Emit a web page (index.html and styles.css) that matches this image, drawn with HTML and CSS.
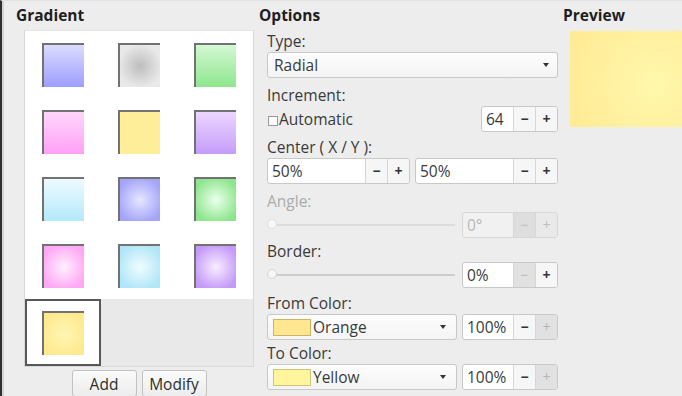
FILE: index.html
```html
<!DOCTYPE html>
<html lang="en">
<head>
    <meta charset="UTF-8">
    <meta name="viewport" content="width=device-width, initial-scale=1.0">
    <title>Gradient</title>
    <link rel="stylesheet" href="styles.css">
</head>
<body>
    <div class="window">
        <section class="col col-gradient">
            <h2 class="heading">Gradient</h2>
            <div class="gradient-list">
                <div class="cell"><span class="swatch sw-blue"></span></div>
                <div class="cell"><span class="swatch sw-grey"></span></div>
                <div class="cell"><span class="swatch sw-green"></span></div>
                <div class="cell"><span class="swatch sw-pink"></span></div>
                <div class="cell"><span class="swatch sw-yellow"></span></div>
                <div class="cell"><span class="swatch sw-purple"></span></div>
                <div class="cell"><span class="swatch sw-cyan"></span></div>
                <div class="cell"><span class="swatch sw-blue-radial"></span></div>
                <div class="cell"><span class="swatch sw-green-radial"></span></div>
                <div class="cell"><span class="swatch sw-pink-radial"></span></div>
                <div class="cell"><span class="swatch sw-cyan-radial"></span></div>
                <div class="cell"><span class="swatch sw-purple-radial"></span></div>
                <div class="cell selected"><span class="swatch sw-yellow-radial"></span></div>
            </div>
            <div class="list-buttons">
                <button class="btn">Add</button>
                <button class="btn">Modify</button>
            </div>
        </section>

        <section class="col col-options">
            <h2 class="heading">Options</h2>
            <div class="options-body">
                <div class="field-label">Type:</div>
                <div class="combo">
                    <span class="combo-text">Radial</span>
                    <span class="arrow"></span>
                </div>

                <div class="field-label label-tall">Increment:</div>
                <div class="row row-between">
                    <label class="check"><span class="check-box"></span>Automatic</label>
                    <div class="spin spin-small">
                        <span class="spin-val">64</span>
                        <span class="spin-btn">&minus;</span>
                        <span class="spin-btn">+</span>
                    </div>
                </div>

                <div class="field-label">Center ( X / Y ):</div>
                <div class="row">
                    <div class="spin spin-half">
                        <span class="spin-val">50%</span>
                        <span class="spin-btn">&minus;</span>
                        <span class="spin-btn">+</span>
                    </div>
                    <div class="spin spin-half">
                        <span class="spin-val">50%</span>
                        <span class="spin-btn">&minus;</span>
                        <span class="spin-btn">+</span>
                    </div>
                </div>

                <div class="field-label label-tall disabled">Angle:</div>
                <div class="row row-slider">
                    <div class="slider slider-disabled"><span class="knob"></span></div>
                    <div class="spin spin-med spin-disabled">
                        <span class="spin-val">0°</span>
                        <span class="spin-btn off">&minus;</span>
                        <span class="spin-btn">+</span>
                    </div>
                </div>

                <div class="field-label label-short">Border:</div>
                <div class="row row-slider">
                    <div class="slider"><span class="knob"></span></div>
                    <div class="spin spin-med">
                        <span class="spin-val">0%</span>
                        <span class="spin-btn off">&minus;</span>
                        <span class="spin-btn">+</span>
                    </div>
                </div>

                <div class="field-label">From Color:</div>
                <div class="row">
                    <div class="combo combo-color">
                        <span class="color-chip chip-orange"></span>
                        <span class="combo-text">Orange</span>
                        <span class="arrow"></span>
                    </div>
                    <div class="spin spin-med">
                        <span class="spin-val">100%</span>
                        <span class="spin-btn">&minus;</span>
                        <span class="spin-btn off">+</span>
                    </div>
                </div>

                <div class="field-label label-short">To Color:</div>
                <div class="row">
                    <div class="combo combo-color">
                        <span class="color-chip chip-yellow"></span>
                        <span class="combo-text">Yellow</span>
                        <span class="arrow"></span>
                    </div>
                    <div class="spin spin-med">
                        <span class="spin-val">100%</span>
                        <span class="spin-btn">&minus;</span>
                        <span class="spin-btn off">+</span>
                    </div>
                </div>
            </div>
        </section>

        <section class="col col-preview">
            <h2 class="heading">Preview</h2>
            <div class="preview"></div>
        </section>
    </div>
</body>
</html>
```

FILE: styles.css
```css
body {
    margin: 0;
    background-color: #ededed;
    font-family: 'Open Sans', 'Noto Sans', sans-serif;
    font-size: 15.5px;
    color: #3a3a3a;
    overflow: hidden;
}

.window {
    display: flex;
    height: 396px;
    box-sizing: border-box;
    padding: 3px 0 0 14px;
    border-top: 1px solid #e2e2e2;
    border-left: 2px solid #2e2e2e;
    box-shadow: inset 2px 0 0 #d4d4d4;
}

.heading {
    margin: 0;
    height: 22px;
    line-height: 22px;
    font-size: 15.5px;
    font-weight: 700;
    color: #1e1e1e;
}

.col-gradient {
    width: 243px;
    flex-shrink: 0;
}

.col-options {
    width: 304px;
    flex-shrink: 0;
}

.col-preview {
    flex: 1;
}

/* gradient list */

.gradient-list {
    margin: 4px 0 0 8px;
    width: 228px;
    height: 335px;
    border: 1px solid #d8d8d8;
    border-top-color: #e4e4e4;
    background-color: #e9e9e9;
    display: grid;
    grid-template-columns: repeat(3, 76px);
    grid-auto-rows: 67px;
    align-content: start;
}

.cell {
    background-color: #fff;
    display: flex;
    justify-content: center;
    align-items: center;
}

.cell.selected {
    box-shadow: inset 0 0 0 2px #585858;
}

.swatch {
    width: 42px;
    height: 44px;
    box-sizing: border-box;
    border-top: 2px solid #727272;
    border-left: 2px solid #727272;
}

.sw-blue { background: linear-gradient(#dcdcff, #9d9dff); }
.sw-grey { background: radial-gradient(circle, #bdbdbd, #e9e9e9 75%); }
.sw-green { background: linear-gradient(#d4f7d4, #8de78d); }
.sw-pink { background: linear-gradient(#ffd6fb, #ffa0f6); }
.sw-yellow { background: #ffee99; }
.sw-purple { background: linear-gradient(#ecd6ff, #c59cfb); }
.sw-cyan { background: linear-gradient(#eefaff, #b4e8fb); }
.sw-blue-radial { background: radial-gradient(circle, #e6e6ff, #a4a4fa 80%); }
.sw-green-radial { background: radial-gradient(circle, #ecffec, #8de68d 80%); }
.sw-pink-radial { background: radial-gradient(circle, #fff0fd, #ffa6f5 80%); }
.sw-cyan-radial { background: radial-gradient(circle, #effdff, #b0e6f8 80%); }
.sw-purple-radial { background: radial-gradient(circle, #f8eeff, #c49af8 80%); }
.sw-yellow-radial { background: radial-gradient(circle, #fff6b4, #ffe98e 80%); }

.list-buttons {
    margin: 3px 0 0 8px;
    width: 230px;
    display: flex;
    justify-content: center;
    gap: 5px;
}

.btn {
    width: 65px;
    height: 27px;
    padding: 0;
    font-family: inherit;
    font-size: 15.5px;
    color: #2e2e2e;
    background: linear-gradient(#fbfbfb, #ececec);
    border: 1px solid #c2c2c2;
    border-radius: 3px;
}

/* options */

.options-body {
    margin-left: 8px;
    width: 291px;
}

.field-label {
    height: 26px;
    box-sizing: border-box;
    padding-top: 5px;
    line-height: 20px;
}

.field-label.label-tall {
    height: 28px;
    padding-top: 7px;
}

.field-label.label-short {
    height: 24px;
    padding-top: 3px;
}

.field-label.disabled {
    color: #ababab;
}

.row {
    display: flex;
    justify-content: space-between;
    align-items: center;
    height: 26px;
}

.combo {
    height: 26px;
    box-sizing: border-box;
    display: flex;
    align-items: center;
    padding: 0 6px;
    background: linear-gradient(#fdfdfd, #f4f4f4);
    border: 1px solid #c8c8c8;
    border-radius: 3px;
}

.combo-text {
    flex: 1;
}

.arrow {
    width: 0;
    height: 0;
    margin-right: 2px;
    border-left: 3px solid transparent;
    border-right: 3px solid transparent;
    border-top: 4px solid #333;
}

.combo-color {
    width: 190px;
    padding-left: 5px;
    padding-right: 8px;
}

.color-chip {
    width: 38px;
    height: 17px;
    box-sizing: border-box;
    margin-right: 2px;
    border: 1px solid #c9b56a;
}

.chip-orange { background-color: #ffe68f; }
.chip-yellow { background-color: #fff59c; border-color: #cfc476; }

.check {
    display: flex;
    align-items: center;
}

.check-box {
    width: 10px;
    height: 10px;
    box-sizing: border-box;
    margin: 3px 1px 0 1px;
    border: 1px solid #9a9a9a;
    background-color: #fafafa;
}

.spin {
    height: 26px;
    box-sizing: border-box;
    display: flex;
    background-color: #fff;
    border: 1px solid #c8c8c8;
    border-radius: 3px;
    overflow: hidden;
}

.spin-val {
    flex: 1;
    padding-left: 4px;
    line-height: 24px;
}

.spin-btn {
    width: 21px;
    flex-shrink: 0;
    text-align: center;
    line-height: 23px;
    font-size: 14px;
    font-weight: 700;
    color: #333;
    border-left: 1px solid #d6d6d6;
    background-color: #f6f6f6;
}

.spin-btn.off {
    background-color: #e1e1e1;
    color: #b5b5b5;
    font-weight: 400;
}

.spin-small { width: 77px; }
.spin-half { width: 143px; }
.spin-med { width: 96px; }

.spin-disabled {
    background-color: #f1f1f1;
    border-color: #d6d6d6;
    color: #b9b9b9;
}

.spin-disabled .spin-btn {
    color: #bdbdbd;
    font-weight: 400;
    background-color: #e9e9e9;
}

.spin-disabled .spin-btn.off {
    background-color: #dedede;
}

.slider {
    position: relative;
    width: 188px;
    height: 2px;
    background-color: #cdcdcd;
}

.slider-disabled {
    background-color: #dcdcdc;
}

.knob {
    position: absolute;
    left: 0;
    top: -5px;
    width: 10px;
    height: 10px;
    box-sizing: border-box;
    border-radius: 50%;
    border: 1px solid #d2d2d2;
    background-color: #f7f7f7;
}

.slider-disabled .knob {
    border-color: #e0e0e0;
}

/* preview */

.preview {
    margin: 5px 0 0 7px;
    height: 96px;
    background: radial-gradient(circle at 75% 55%, #fff8ac, #ffea94 95%);
}
```
